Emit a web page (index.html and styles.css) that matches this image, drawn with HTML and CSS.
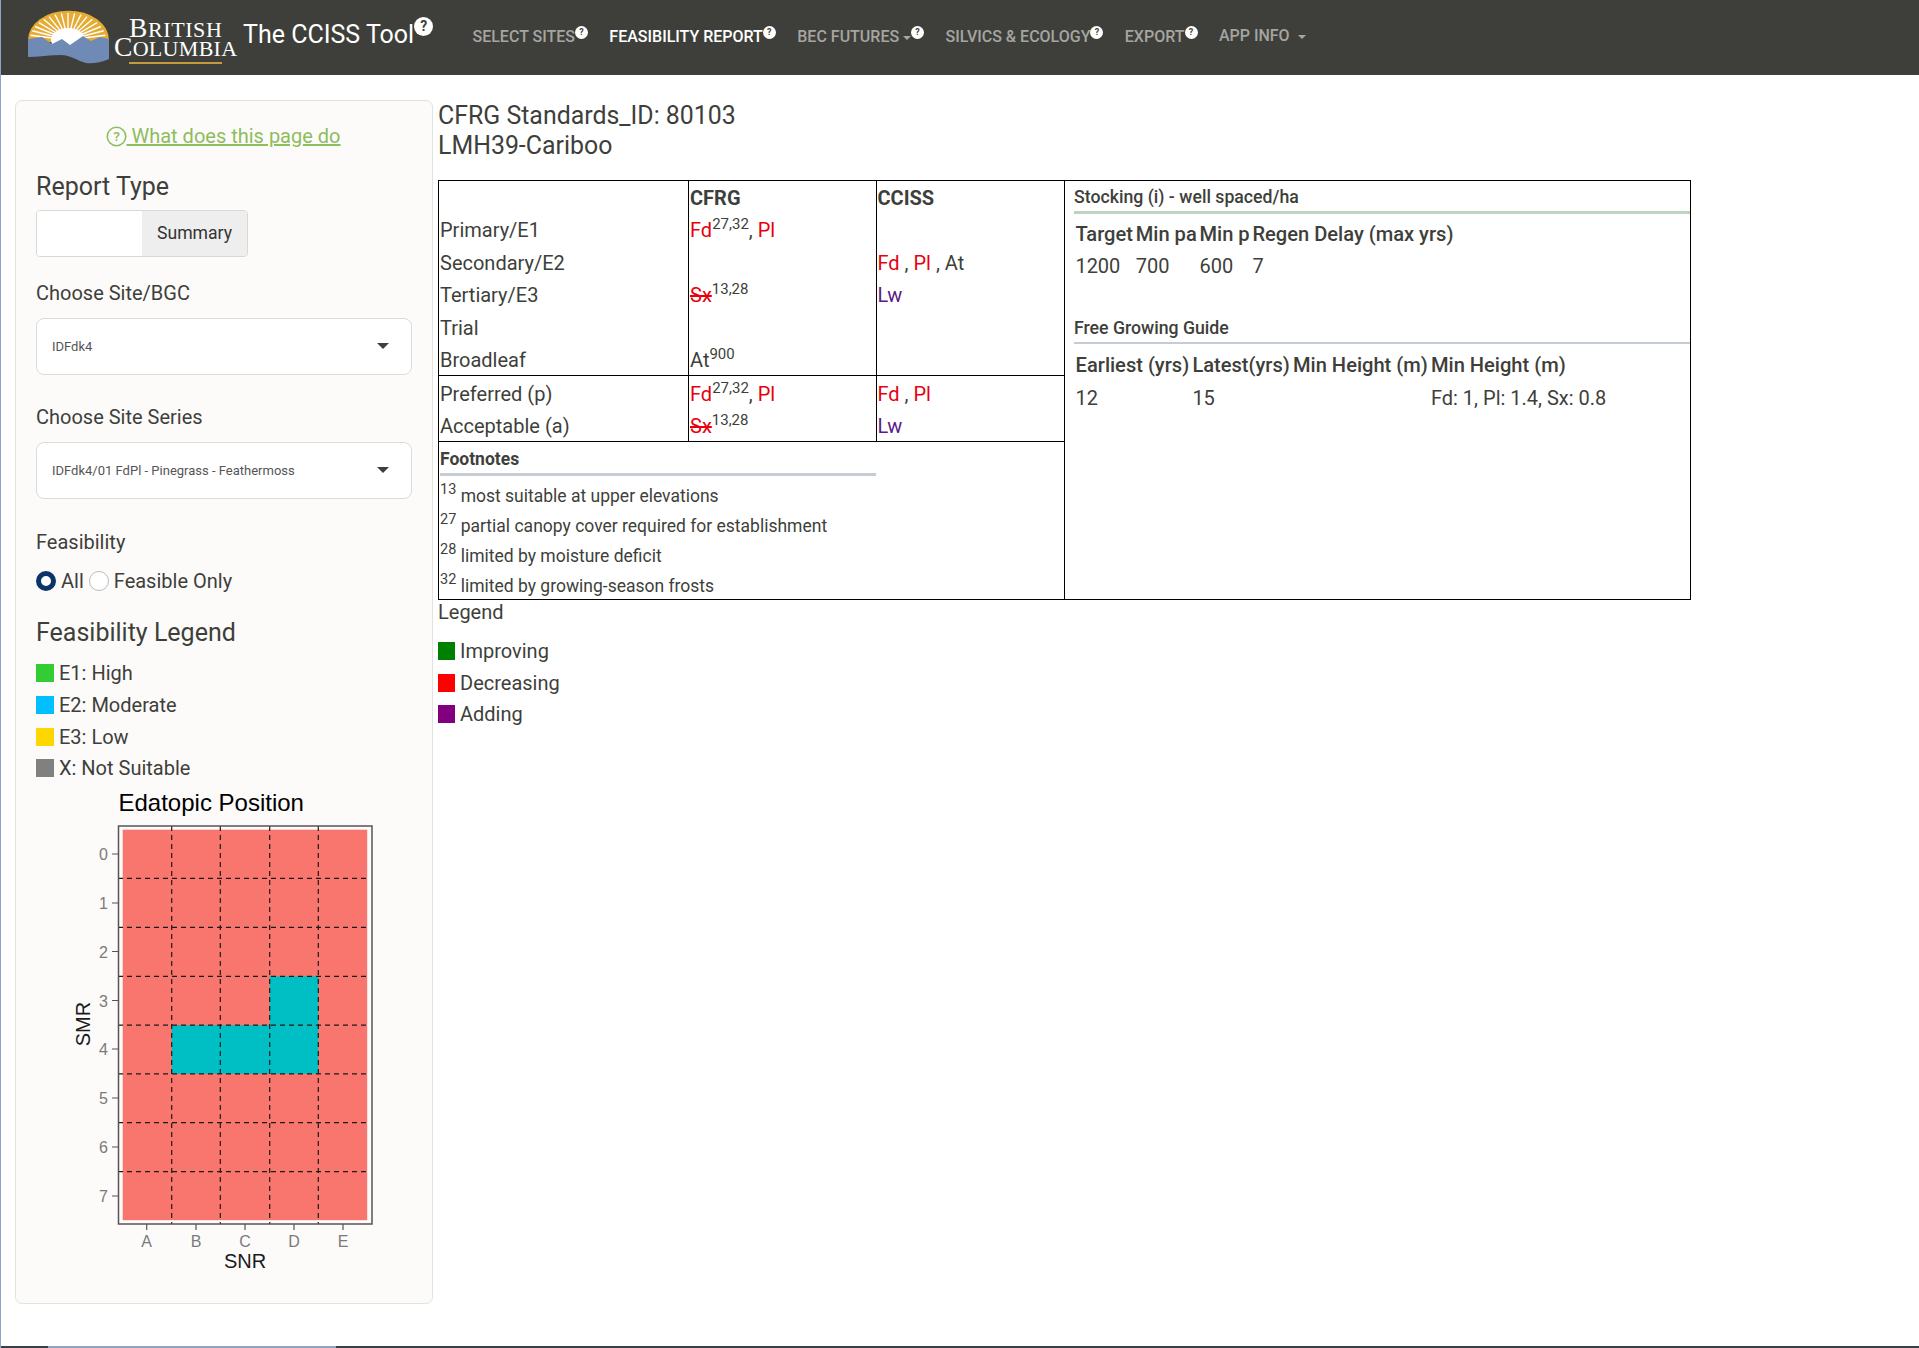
FILE: index.html
```html
<!DOCTYPE html>
<html lang="en">
<head>
    <meta charset="UTF-8">
    <meta name="viewport" content="width=device-width, initial-scale=1.0">
    <title>The CCISS Tool</title>
    <link rel="stylesheet" href="styles.css">
</head>
<body>
    <nav class="navbar">
        <svg class="logo" width="82" height="56" viewBox="0 0 82 56">
            <path d="M0 34V32A40 29 0 0 1 81 32V34Z" fill="#e5ab33"/>
            <path fill="none" stroke="#fff" stroke-width="1.4" d="M40 32L77.400 27.300M40 32L75.700 22.800M40 32L72.900 18.500M40 32L69.100 14.600M40 32L64.400 11.300M40 32L59 8.600M40 32L53 6.600M40 32L46.600 5.400M40 32L40 5M40 32L33.400 5.400M40 32L27 6.600M40 32L21 8.600M40 32L15.600 11.300M40 32L10.900 14.600M40 32L7.100 18.500M40 32L4.300 22.800M40 32L2.600 27.300"/>
            <ellipse cx="40" cy="32" rx="17" ry="12" fill="#fff"/>
            <path d="M0 31L14 29L24 36L34 31L42 37L55 28L63 33L72 29L81 31V51C72 55 64 56 58 55C50 53 42 47 33 47C22 47 10 49 0 49Z" fill="#6f8ab4"/>
        </svg>
        <svg class="wordmark" width="124" height="62" viewBox="0 0 124 62">
            <text x="15" y="33" class="wm-line wm-british"><tspan class="wm-cap">B</tspan>RITISH</text>
            <text x="0" y="52" class="wm-line wm-columbia"><tspan class="wm-cap">C</tspan>OLUMBIA</text>
            <rect x="15" y="58" width="93" height="2" fill="#c39a3d"/>
        </svg>
        <div class="brand">The CCISS Tool<span class="badge badge-big">?</span></div>
        <ul class="nav-links">
            <li>Select Sites<span class="badge">?</span></li>
            <li class="active">Feasibility Report<span class="badge">?</span></li>
            <li>BEC Futures <i class="nav-caret"></i><span class="badge">?</span></li>
            <li>Silvics &amp; Ecology<span class="badge">?</span></li>
            <li>Export<span class="badge">?</span></li>
            <li>App Info <i class="nav-caret nav-caret-far"></i></li>
        </ul>
    </nav>

    <div class="page">
        <aside class="sidebar">
            <a class="help-link" href="#">
                <svg width="21" height="21" viewBox="0 0 20 20"><circle cx="10" cy="10" r="8.8" fill="none" stroke="#8dbd5c" stroke-width="1.5"/><text x="10" y="14.5" text-anchor="middle" class="help-q">?</text></svg>
                <span>&nbsp;What does this page do</span>
            </a>
            <h4 class="report-title">Report Type</h4>
            <div class="btn-group"><span class="btn-blank"></span><span class="btn-grey">Summary</span></div>

            <label class="field-label label-site">Choose Site/BGC</label>
            <div class="select-box">IDFdk4<i class="select-caret"></i></div>

            <label class="field-label label-series">Choose Site Series</label>
            <div class="select-box">IDFdk4/01 FdPl - Pinegrass - Feathermoss<i class="select-caret"></i></div>

            <label class="field-label label-feas">Feasibility</label>
            <div class="radios">
                <i class="radio radio-on"></i><span>All</span>
                <i class="radio"></i><span>Feasible Only</span>
            </div>

            <h4 class="legend-title">Feasibility Legend</h4>
            <ul class="feas-legend">
                <li><i class="swatch sw-e1"></i>E1: High</li>
                <li><i class="swatch sw-e2"></i>E2: Moderate</li>
                <li><i class="swatch sw-e3"></i>E3: Low</li>
                <li><i class="swatch sw-x"></i>X: Not Suitable</li>
            </ul>

            <svg class="plot" width="340" height="500" viewBox="0 0 340 500">
                <text x="58.5" y="32" class="plot-title">Edatopic Position</text>
                <rect x="62.7" y="50.7" width="244.5" height="390.5" fill="#F8766D"/>
                <rect x="209.7" y="197.3" width="48.6" height="48.9" fill="#00BFC4"/>
                <rect x="111.7" y="246.2" width="146.6" height="48.6" fill="#00BFC4"/>
                <g stroke="#1a1a1a" stroke-width="1.2" stroke-dasharray="5 4" fill="none">
                    <path d="M111.7 47V445M160.3 47V445M209.7 47V445M258.3 47V445"/>
                    <path d="M58 99.3H310M58 148.3H310M58 197.3H310M58 246.2H310M58 294.8H310M58 343.7H310M58 392.7H310"/>
                </g>
                <rect x="58.5" y="47" width="253.5" height="398" fill="none" stroke="#555" stroke-width="1.5"/>
                <g stroke="#555" stroke-width="1.2">
                    <path d="M52 75H58M52 124H58M52 172.500H58M52 221.500H58M52 270H58M52 319H58M52 368H58M52 417H58"/>
                    <path d="M86.700 445V451M136 445V451M185 445V451M234 445V451M283 445V451"/>
                </g>
                <g class="tick-label" text-anchor="end">
                    <text x="48" y="81">0</text><text x="48" y="130">1</text><text x="48" y="178.500">2</text><text x="48" y="227.500">3</text>
                    <text x="48" y="276">4</text><text x="48" y="325">5</text><text x="48" y="374">6</text><text x="48" y="423">7</text>
                </g>
                <g class="tick-label" text-anchor="middle">
                    <text x="86.700" y="468">A</text><text x="136" y="468">B</text><text x="185" y="468">C</text><text x="234" y="468">D</text><text x="283" y="468">E</text>
                </g>
                <text x="185" y="489" text-anchor="middle" class="axis-label">SNR</text>
                <text transform="translate(30 245) rotate(-90)" text-anchor="middle" class="axis-label">SMR</text>
            </svg>
        </aside>

        <main class="content">
            <h3 class="report-head">CFRG Standards_ID: 80103<br>LMH39-Cariboo</h3>
            <table class="report">
                <colgroup><col class="c1"><col class="c2"><col class="c3"><col class="c4"></colgroup>
                <tr class="hd">
                    <td></td><td class="vl"><b>CFRG</b></td><td class="vl"><b>CCISS</b></td>
                    <td class="side" rowspan="9">
                        <div class="side-title stocking">Stocking (i) - well spaced/ha</div>
                        <table class="mini">
                            <tr><th>Target</th><th>Min pa</th><th>Min p</th><th>Regen Delay (max yrs)</th></tr>
                            <tr><td>1200</td><td>700</td><td>600</td><td>7</td></tr>
                        </table>
                        <div class="side-title guide">Free Growing Guide</div>
                        <table class="mini mini-guide">
                            <tr><th>Earliest (yrs)</th><th>Latest(yrs)</th><th>Min Height (m)</th><th>Min Height (m)</th></tr>
                            <tr><td>12</td><td>15</td><td></td><td>Fd: 1, Pl: 1.4, Sx: 0.8</td></tr>
                        </table>
                    </td>
                </tr>
                <tr><td>Primary/E1</td><td class="vl"><span class="red">Fd</span><sup>27,32</sup>, <span class="red">Pl</span></td><td class="vl"></td></tr>
                <tr><td>Secondary/E2</td><td class="vl"></td><td class="vl"><span class="red">Fd</span> , <span class="red">Pl</span> , At</td></tr>
                <tr><td>Tertiary/E3</td><td class="vl"><s class="red">Sx</s><sup>13,28</sup></td><td class="vl"><span class="purple">Lw</span></td></tr>
                <tr><td>Trial</td><td class="vl"></td><td class="vl"></td></tr>
                <tr class="last"><td>Broadleaf</td><td class="vl">At<sup>900</sup></td><td class="vl"></td></tr>
                <tr class="pref"><td>Preferred (p)</td><td class="vl"><span class="red">Fd</span><sup>27,32</sup>, <span class="red">Pl</span></td><td class="vl"><span class="red">Fd</span> , <span class="red">Pl</span></td></tr>
                <tr class="last"><td>Acceptable (a)</td><td class="vl"><s class="red">Sx</s><sup>13,28</sup></td><td class="vl"><span class="purple">Lw</span></td></tr>
                <tr class="foot-row">
                    <td colspan="3">
                        <div class="foot-title">Footnotes</div>
                        <div class="foot-line"><sup>13</sup> most suitable at upper elevations</div>
                        <div class="foot-line"><sup>27</sup> partial canopy cover required for establishment</div>
                        <div class="foot-line"><sup>28</sup> limited by moisture deficit</div>
                        <div class="foot-line"><sup>32</sup> limited by growing-season frosts</div>
                    </td>
                </tr>
            </table>
            <div class="legend-head">Legend</div>
            <ul class="trend-legend">
                <li><i class="chip chip-green"></i>Improving</li>
                <li><i class="chip chip-red"></i>Decreasing</li>
                <li><i class="chip chip-purple"></i>Adding</li>
            </ul>
        </main>
    </div>
    <div class="bottom-strip"><i></i></div>
</body>
</html>
```

FILE: styles.css
```css
html, body {
    margin: 0;
    padding: 0;
    height: 1348px;
    overflow: hidden;
}

body {
    font-family: Roboto, "Liberation Sans", sans-serif;
    color: #3e3f3a;
    background-color: #fff;
    border-left: 1px solid #8fa4c9;
    box-sizing: border-box;
    position: relative;
}

/* navbar */
.navbar {
    height: 75px;
    background-color: #3e3f3a;
    display: flex;
    align-items: flex-start;
}

.logo {
    margin: 8px 0 0 27px;
    flex: none;
}

.wordmark {
    margin: 4px 0 0 4px;
    flex: none;
}

.wm-line {
    font-family: "Liberation Serif", serif;
    font-size: 22px;
    fill: #fff;
}

.wm-cap {
    font-size: 27.5px;
}

.wm-british {
    letter-spacing: 0.6px;
}

.wm-columbia {
    letter-spacing: 0.3px;
}

.brand {
    color: #fff;
    font-size: 25px;
    line-height: 30px;
    margin: 17px 0 0 5px;
    flex: none;
    width: 229.5px;
}

.badge {
    display: inline-block;
    width: 13px;
    height: 13px;
    border-radius: 50%;
    background-color: #fff;
    color: #3e3f3a;
    font-size: 9px;
    font-weight: 700;
    line-height: 13px;
    text-align: center;
    vertical-align: 7px;
    text-transform: none;
}

.badge-big {
    width: 19px;
    height: 19px;
    font-size: 14px;
    line-height: 19px;
    vertical-align: 12px;
}

.nav-links {
    list-style: none;
    margin: 26px 0 0;
    padding: 0;
    display: flex;
    gap: 21.4px;
    font-size: 16px;
    font-weight: 500;
    text-transform: uppercase;
    color: #a5a5a1;
    line-height: 20px;
}

.nav-links .active {
    color: #fff;
}

.nav-caret {
    display: inline-block;
    border-top: 4px solid #a5a5a1;
    border-left: 4px solid transparent;
    border-right: 4px solid transparent;
    vertical-align: 2px;
}

.nav-caret-far {
    margin-left: 4px;
}

/* layout */
.page {
    display: flex;
    align-items: flex-start;
}

.sidebar {
    width: 418px;
    height: 1204px;
    box-sizing: border-box;
    margin: 25px 0 0 14px;
    padding: 23px 20px 0;
    background-color: #fcfbfa;
    border: 1px solid #e4e2de;
    border-radius: 7px;
    flex: none;
    position: relative;
}

.help-link {
    display: flex;
    justify-content: center;
    align-items: center;
    color: #8dbd5c;
    font-size: 20px;
    line-height: 24px;
    height: 24px;
    text-decoration: none;
    padding-right: 2px;
}

.help-link span {
    text-decoration: underline;
}

.help-q {
    font-family: Roboto, sans-serif;
    font-size: 13px;
    font-weight: 500;
    fill: #8dbd5c;
}

.report-title, .legend-title {
    font-size: 25px;
    font-weight: 400;
    line-height: 30px;
    margin: 0;
}

.report-title {
    margin-top: 24px;
}

.btn-group {
    display: flex;
    width: 212px;
    height: 47px;
    margin-top: 8px;
    box-sizing: border-box;
    border: 1px solid #d8d8d4;
    border-radius: 4px;
    overflow: hidden;
    font-size: 17.6px;
}

.btn-blank {
    width: 105px;
    background-color: #fff;
}

.btn-grey {
    flex: 1;
    background-color: #eee;
    color: #333;
    text-align: center;
    line-height: 45px;
}

.field-label {
    display: block;
    font-size: 20px;
    line-height: 24px;
}

.label-site {
    margin-top: 24px;
}

.label-series {
    margin-top: 30px;
    margin-bottom: 2px;
}

.label-feas {
    margin-top: 31px;
}

.select-box {
    height: 57px;
    margin-top: 13px;
    box-sizing: border-box;
    background-color: #fff;
    border: 1px solid #dcdcdc;
    border-radius: 8px;
    padding-left: 15px;
    font-size: 13px;
    line-height: 55px;
    position: relative;
    color: #555;
}

.select-caret {
    position: absolute;
    right: 22px;
    top: 24px;
    border-top: 6px solid #3e3f3a;
    border-left: 6px solid transparent;
    border-right: 6px solid transparent;
}

.radios {
    display: flex;
    align-items: center;
    height: 24px;
    margin-top: 15px;
    font-size: 20px;
}

.radio {
    width: 20px;
    height: 20px;
    box-sizing: border-box;
    border-radius: 50%;
    border: 1px solid #bbb;
    background-color: #fff;
    margin-right: 5px;
    flex: none;
}

.radios span {
    margin-right: 5px;
}

.radio-on {
    border: 5px solid #0b3566;
}

.legend-title {
    margin-top: 25px;
}

.feas-legend {
    list-style: none;
    margin: 9.5px 0 0;
    padding: 0;
    font-size: 20px;
}

.feas-legend li {
    display: flex;
    align-items: center;
    height: 31.7px;
}

.swatch {
    width: 18px;
    height: 18px;
    margin-right: 5px;
    flex: none;
}

.sw-e1 { background-color: #32cd32; }
.sw-e2 { background-color: #00bfff; }
.sw-e3 { background-color: #ffd700; }
.sw-x { background-color: #808080; }

/* ggplot picture sits at its own spot in the panel */
.plot {
    position: absolute;
    left: 44px;
    top: 678px;
}

.plot-title {
    font-family: "Liberation Sans", Arial, sans-serif;
    font-size: 24px;
    fill: #000;
}

.tick-label {
    font-family: "Liberation Sans", Arial, sans-serif;
    font-size: 16px;
    fill: #7a7a7a;
}

.axis-label {
    font-family: "Liberation Sans", Arial, sans-serif;
    font-size: 20px;
    fill: #1a1a1a;
}

/* report */
.content {
    margin-left: 5px;
    flex: none;
    width: 1400px;
}

.report-head {
    font-size: 24.9px;
    font-weight: 400;
    line-height: 30px;
    margin: 26px 0 0;
}

.report {
    margin-top: 19px;
    width: 1251.5px;
    table-layout: fixed;
    border-collapse: collapse;
    border: 1.5px solid #000;
    font-size: 20px;
    font-weight: 400;
}

.c1 { width: 250px; }
.c2 { width: 187.5px; }
.c3 { width: 188.5px; }
.c4 { width: 625.5px; }

.report > tbody > tr > td {
    padding: 2px 1px 0;
    height: 30.5px;
    vertical-align: middle;
}

.report b {
    font-weight: 700;
    font-size: 20px;
}

.report .vl {
    border-left: 1px solid #000;
}

.report > tbody > tr.hd > td {
    height: 30px;
}

.report .last > td {
    border-bottom: 1px solid #000;
}

.report > tbody > tr.last > td {
    height: 29.5px;
}

.report > tbody > tr.pref > td {
    height: 30.5px;
    padding-top: 3px;
}

.report > tbody > tr > td.side {
    border-left: 1.5px solid #000;
    vertical-align: top;
    padding: 0 0 0 9px;
}

.report sup {
    font-size: 15px;
    line-height: 0;
}

.red { color: #e8000d; }
.purple { color: #5b1a87; }

.side-title {
    font-size: 17.7px;
    font-weight: 500;
    line-height: 22px;
}

.stocking {
    padding-top: 5px;
    padding-bottom: 3px;
    border-bottom: 3px solid #bfd4c0;
}

.guide {
    margin-top: 34px;
    padding-bottom: 3px;
    border-bottom: 2px solid #c5ccd3;
}

.mini {
    border-collapse: collapse;
    margin-top: 5px;
}

.mini-guide {
    margin-top: 6px;
}

.mini th {
    font-size: 20.1px;
    font-weight: 500;
    text-align: left;
    padding: 0 1.4px;
    height: 30px;
    white-space: nowrap;
}

.mini td {
    padding: 0 1.4px;
    height: 34px;
    font-size: 20px;
    font-weight: 400;
}

.mini-guide th, .mini-guide td {
    padding: 0 1.6px;
}

.mini-guide td {
    height: 36px;
}

.report > tbody > tr.foot-row > td {
    vertical-align: top;
    padding: 1px 1px 0;
}

.foot-title {
    font-size: 17.5px;
    font-weight: 700;
    line-height: 22px;
    padding-top: 5px;
    padding-bottom: 3px;
    width: 436px;
    border-bottom: 3px solid #c5ccd3;
    margin-bottom: 5px;
}

.foot-line {
    font-size: 17.5px;
    line-height: 30px;
}

.foot-line:last-child {
    margin-bottom: -2px;
}

.foot-line sup {
    font-size: 14.5px;
    position: relative;
    top: -1px;
}

.legend-head {
    font-size: 20px;
    font-weight: 400;
    line-height: 24px;
    margin-top: 0;
}

.trend-legend {
    list-style: none;
    margin: 12px 0 0;
    padding: 0;
    font-size: 20px;
    font-weight: 400;
}

.trend-legend li {
    display: flex;
    align-items: center;
    height: 31.6px;
}

.chip {
    width: 17px;
    height: 18px;
    margin-right: 5px;
    flex: none;
}

.chip-green { background-color: #008000; }
.chip-red { background-color: #ff0000; }
.chip-purple { background-color: #800080; }

.bottom-strip {
    position: absolute;
    left: -1px;
    right: 0;
    bottom: 0;
    height: 2px;
    background-color: #3a3f4a;
}

.bottom-strip i {
    display: block;
    margin-left: 48px;
    width: 288px;
    height: 2px;
    background-color: #8fa4c9;
}
```
